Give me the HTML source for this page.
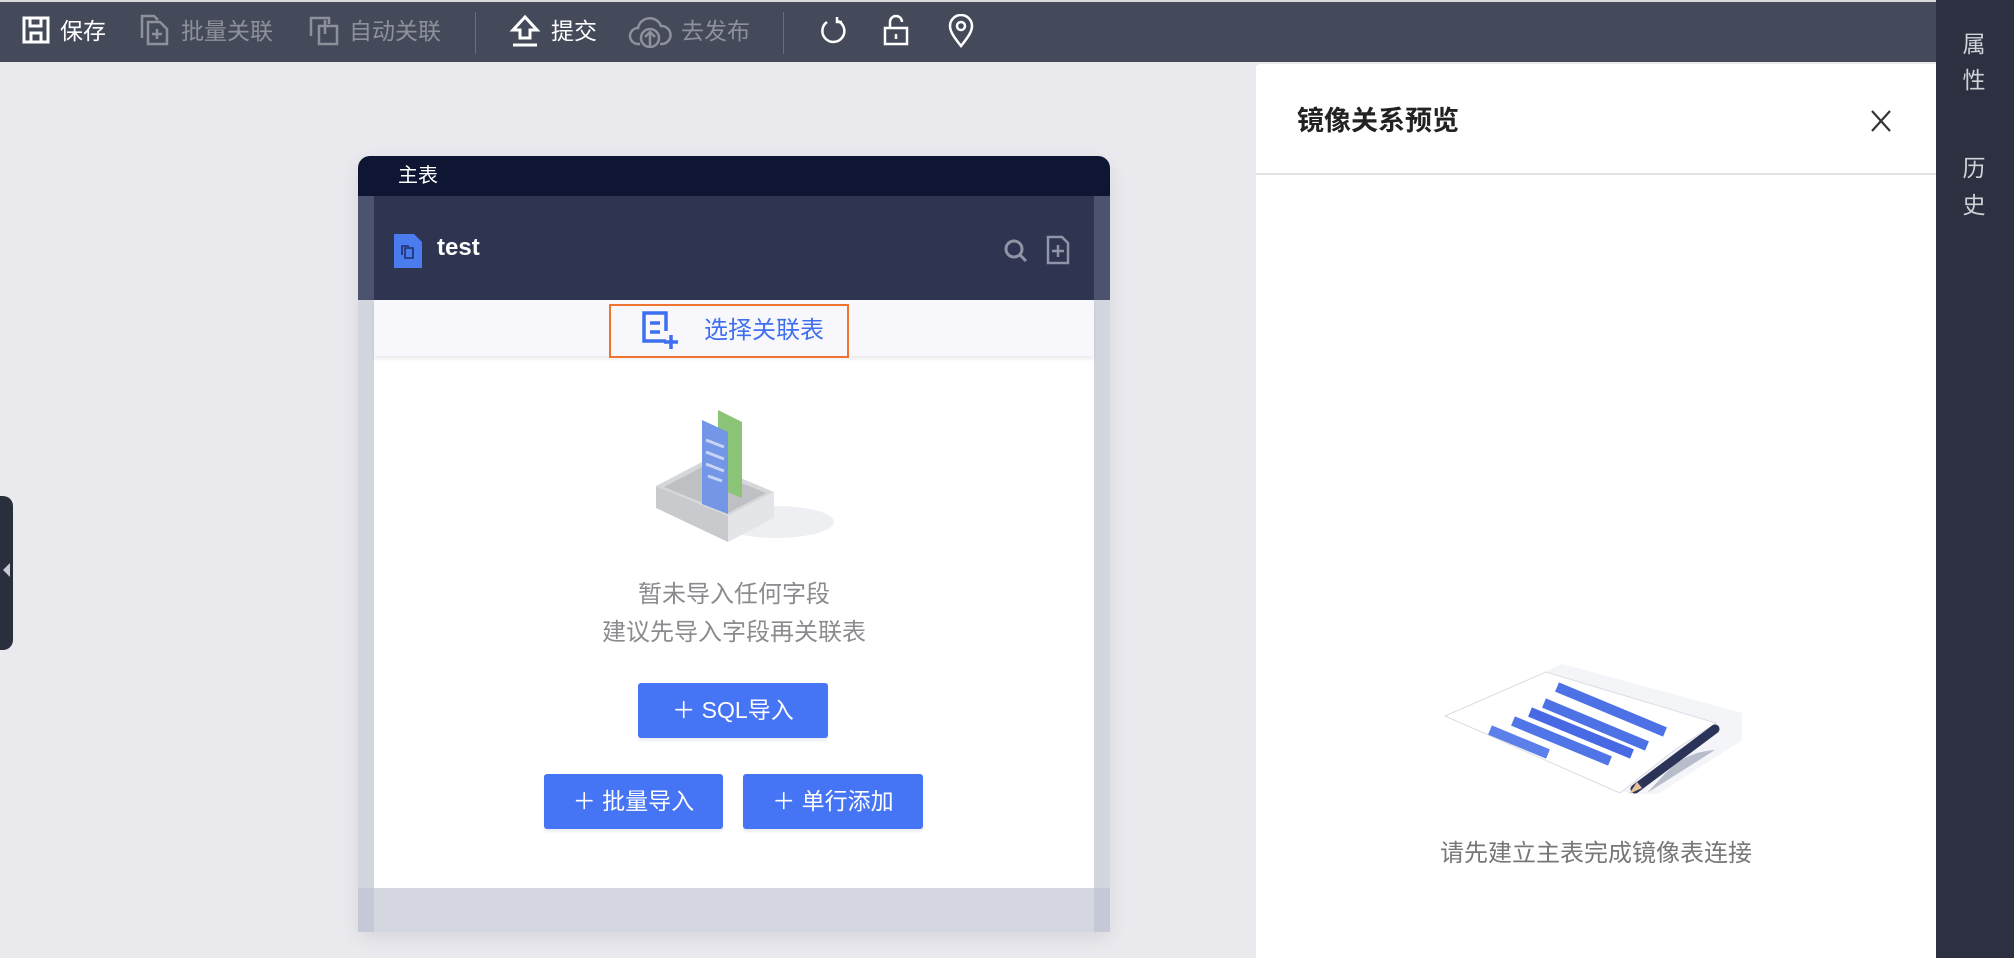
<!DOCTYPE html>
<html><head><meta charset="utf-8"><style>
*{margin:0;padding:0;box-sizing:border-box}
body{width:2014px;height:958px;overflow:hidden;background:#e9e9ee;font-family:"Liberation Sans","Noto Sans CJK SC",sans-serif;position:relative}
.a{position:absolute}
.tb{left:0;top:0;width:1936px;height:62px;background:#454a5a;border-top:2px solid #d8d8dc}
.t{position:absolute;top:0;height:60px;line-height:58px;font-size:23px;color:#8e919c;white-space:nowrap}
.w{color:#fff}
.ic{position:absolute;top:14px}
.sep{position:absolute;top:10px;width:1px;height:42px;background:#6b6f7c}
.btn{position:absolute;background:#4574f5;color:#fff;font-size:23px;text-align:center;border-radius:3px;box-shadow:0 3px 2px #eceef2}
</style></head><body>
<div class="a tb">
 <svg class="ic" style="left:22px" width="28" height="28" viewBox="0 0 28 28" fill="none" stroke="#fff" stroke-width="3"><rect x="2" y="2" width="24" height="24"/><path d="M8 2v8h11V2M9 26v-9h10v9"/></svg>
 <div class="t w" style="left:60px">保存</div>
 <svg class="ic" style="left:140px;top:12px" width="30" height="32" viewBox="0 0 30 32" fill="none" stroke="#8e919c" stroke-width="2.5"><path d="M2 24V2h12l4 4"/><path d="M8 8h12l7 7v15H8z"/><path d="M17 15v10M12 20h10"/></svg>
 <div class="t" style="left:181px">批量关联</div>
 <svg class="ic" style="left:309px" width="30" height="30" viewBox="0 0 30 30" fill="none" stroke="#8e919c" stroke-width="2.5"><path d="M2 20V2h18v6"/><path d="M10 10h18v18H10z"/><path d="M16 4v14"/></svg>
 <div class="t" style="left:349px">自动关联</div>
 <div class="sep" style="left:475px"></div>
 <svg class="ic" style="left:509px;top:12px" width="32" height="34" viewBox="0 0 32 34" fill="none" stroke="#fff" stroke-width="3"><path d="M16 3L4 16h7v8h10v-8h7z"/><path d="M4 31h24"/></svg>
 <div class="t w" style="left:551px">提交</div>
 <svg class="ic" style="left:628px;top:12px" width="44" height="34" viewBox="0 0 44 34" fill="none" stroke="#8e919c" stroke-width="2.5"><path d="M12 30H10a8 8 0 0 1 0-16 12 12 0 0 1 23-2 9 9 0 0 1 1 18h-2"/><circle cx="22" cy="24" r="9"/><path d="M22 32V18M17 23l5-5 5 5"/></svg>
 <div class="t" style="left:681px">去发布</div>
 <div class="sep" style="left:783px"></div>
 <svg class="ic" style="left:818px" width="30" height="30" viewBox="0 0 30 30" fill="none" stroke="#fff" stroke-width="2.5"><path d="M20 5A11 11 0 1 1 9 6"/><path d="M19 1v5h5"/></svg>
 <svg class="ic" style="left:882px;top:12px" width="28" height="32" viewBox="0 0 28 32" fill="none" stroke="#fff" stroke-width="2.5"><path d="M8 14V8a6 6 0 0 1 12 0"/><rect x="3" y="14" width="22" height="16"/><path d="M14 20v5"/></svg>
 <svg class="ic" style="left:947px;top:12px" width="28" height="34" viewBox="0 0 28 34" fill="none" stroke="#fff" stroke-width="2.5"><path d="M14 32C6 22 3 17 3 12a11 11 0 0 1 22 0c0 5-3 10-11 20z"/><circle cx="14" cy="12" r="4"/></svg>
</div>
<div class="a" style="left:1936px;top:0;width:78px;height:958px;background:#2c3040;color:#d0d2d8;font-size:23px;text-align:center">
 <div class="a" style="left:0;width:76px;top:26px;line-height:36px">属<br>性</div>
 <div class="a" style="left:0;width:76px;top:150px;line-height:37px">历<br>史</div>
</div>
<div class="a" style="left:0;top:496px;width:13px;height:154px;background:#2a2f3d;border-radius:0 10px 10px 0"></div>
<div class="a" style="left:3px;top:563px;width:0;height:0;border-top:7px solid transparent;border-bottom:7px solid transparent;border-right:7px solid #c8cad2"></div>
<div class="a" style="left:358px;top:156px;width:752px;height:776px;border-radius:12px 12px 0 0;overflow:hidden;background:#d3d5df;box-shadow:0 6px 18px rgba(0,0,0,.08)">
 <div class="a" style="left:0;top:0;width:752px;height:40px;background:#0f1633"></div>
 <div class="a" style="left:40px;top:0;line-height:40px;color:#fff;font-size:20px">主表</div>
 <div class="a" style="left:0;top:40px;width:752px;height:104px;background:#4c536e"></div>
 <div class="a" style="left:16px;top:40px;width:720px;height:104px;background:#2f3550"></div>
 <svg class="a" style="left:36px;top:78px" width="28" height="34" viewBox="0 0 28 34"><path d="M0 0h20l8 8v26H0z" fill="#4a7cf0"/><g fill="none" stroke="#1d2f6a" stroke-width="1.6"><path d="M8 21v-9h7"/><path d="M11 14h8v10h-8z"/></g></svg>
 <div class="a" style="left:79px;top:74px;color:#fff;font-size:24px;line-height:36px;font-weight:bold">test</div>
 <svg class="a" style="left:645px;top:82px" width="26" height="26" viewBox="0 0 26 26" fill="none" stroke="#8f94a6" stroke-width="3"><circle cx="11" cy="11" r="8"/><path d="M17 17l6 6"/></svg>
 <svg class="a" style="left:688px;top:79px" width="24" height="30" viewBox="0 0 24 30" fill="none" stroke="#8f94a6" stroke-width="2.5"><path d="M2 2h14l6 6v20H2z"/><path d="M12 10v12M6 16h12"/></svg>
 <div class="a" style="left:16px;top:144px;width:720px;height:588px;background:#fff"></div>
 <div class="a" style="left:16px;top:144px;width:720px;height:56px;background:#f8f8fc;box-shadow:0 3px 4px rgba(0,0,0,.08)"></div>
 <div class="a" style="left:251px;top:148px;width:240px;height:54px;border:2.5px solid #ee7430"></div>
 <svg class="a" style="left:284px;top:155px" width="36" height="38" viewBox="0 0 36 38" fill="none" stroke="#3e6ff0" stroke-width="3.5"><path d="M24 30H2V2h22v18"/><path d="M8 12h10M8 21h10M29 24v14M22 31h14"/></svg>
 <div class="a" style="left:346px;top:160px;color:#3e6ff0;font-size:24px;line-height:30px">选择关联表</div>
 <svg class="a" style="left:298px;top:254px" width="180" height="140" viewBox="0 0 180 140">
  <ellipse cx="120" cy="112" rx="58" ry="16" fill="#eeeff2"/>
  <path d="M0 76l46-24 72 30-46 24z" fill="#d6d7da"/>
  <path d="M0 76v22l72 34v-26z" fill="#c9cacd"/>
  <path d="M72 106v26l46-24V82z" fill="#e4e5e8"/>
  <path d="M8 77l38-20 64 26-38 20z" fill="#bfc0c4"/>
  <path d="M62 0l24 12v76l-24-10z" fill="#8bc476"/>
  <path d="M46 10l26 12v82l-26-10z" fill="#7396e6"/>
  <g stroke="#c7d4f7" stroke-width="3"><path d="M50 30l18 7M50 42l18 7M50 54l18 7M52 66l14 5"/></g>
 </svg>
 <div class="a" style="left:16px;top:420px;width:720px;text-align:center;color:#8b8b8f;font-size:24px;line-height:38px">暂未导入任何字段<br>建议先导入字段再关联表</div>
 <div class="btn" style="left:280px;top:527px;width:190px;height:55px;line-height:55px">＋ SQL导入</div>
 <div class="btn" style="left:186px;top:618px;width:179px;height:55px;line-height:55px">＋ 批量导入</div>
 <div class="btn" style="left:385px;top:618px;width:180px;height:55px;line-height:55px">＋ 单行添加</div>
 <div class="a" style="left:0;top:732px;width:752px;height:44px;background:#d4d6e0"></div>
 <div class="a" style="left:0;top:732px;width:16px;height:44px;background:#c5c8d6"></div>
 <div class="a" style="left:736px;top:732px;width:16px;height:44px;background:#c5c8d6"></div>
</div>
<div class="a" style="left:1256px;top:64px;width:680px;height:894px;background:#fff;border-radius:4px 0 0 0">
 <div class="a" style="left:41px;top:37px;font-size:27px;font-weight:bold;color:#222;line-height:40px">镜像关系预览</div>
 <svg class="a" style="left:614px;top:45px" width="22" height="24" viewBox="0 0 22 24" stroke="#333" stroke-width="2.2"><path d="M2 2l18 20M20 2L2 22"/></svg>
 <div class="a" style="left:0;top:109px;width:680px;height:2px;background:#e4e4e6"></div>
 <svg class="a" style="left:186px;top:590px" width="300" height="140" viewBox="0 0 300 140">
  <path d="M3 63L120 10l210 57-125 80z" fill="#f4f5f8"/>
  <path d="M3 62L104 18l170 51-40 26-56 44z" fill="#fff" stroke="#dcdde2"/>
  <path d="M205 139c20-20 30-40 68-43z" fill="#b8bdcc"/>
  <g stroke-linecap="butt" stroke-width="10"><path d="M115 33l108 45" stroke="#4d72e6"/><path d="M102 49l103 43" stroke="#4d72e6"/><path d="M88 58l102 42" stroke="#4769e4"/><path d="M71 67l97 40" stroke="#5075e6"/><path d="M48 76l58 24" stroke="#5d7fea"/></g>
  <path d="M193 135l80-60" stroke="#2b3358" stroke-width="9" stroke-linecap="round"/>
  <path d="M187 140l8-12 5 6z" fill="#e6c39a"/>
 </svg>
 <div class="a" style="left:0;top:774px;width:680px;text-align:center;color:#777;font-size:24px;line-height:32px">请先建立主表完成镜像表连接</div>
</div>
</body></html>
